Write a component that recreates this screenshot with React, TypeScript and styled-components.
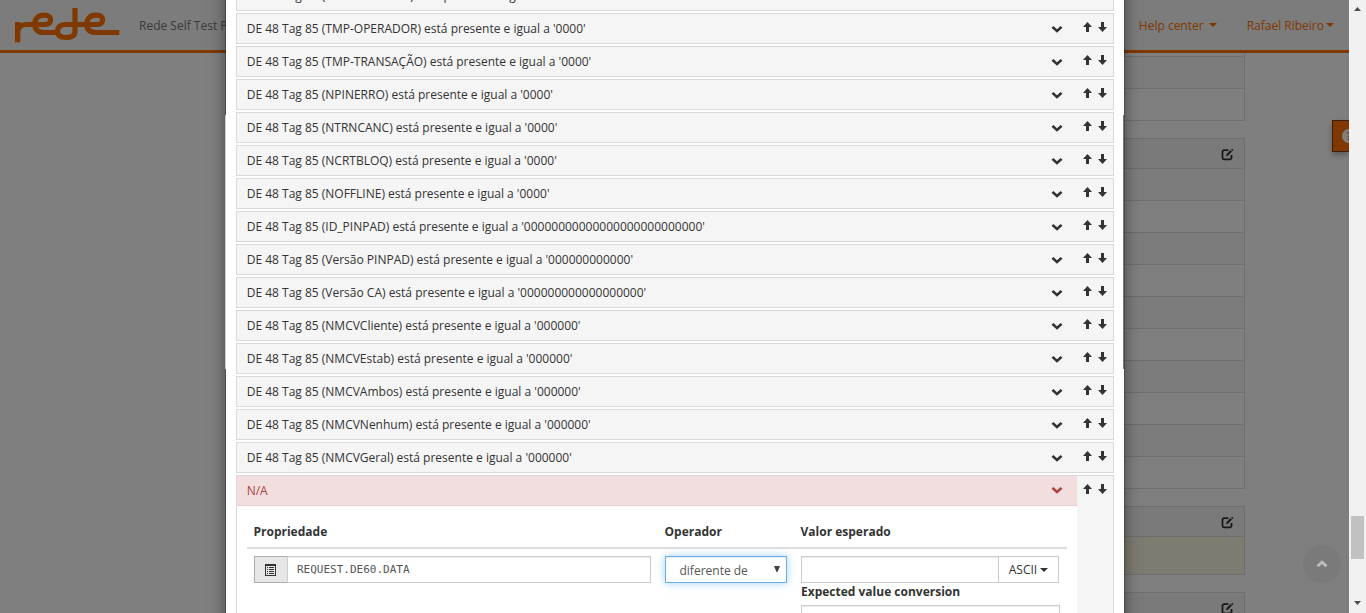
import React from "react";
import styled, { createGlobalStyle, css } from "styled-components";

const GlobalStyle = createGlobalStyle`
  * { box-sizing: border-box; }
  html, body { margin: 0; padding: 0; overflow: hidden; }
  body {
    font-family: "Open Sans", "Liberation Sans", sans-serif;
    font-size: 12px;
    line-height: 17px;
    color: #333;
    background: #fff;
  }
`;

const Screen = styled.div`
  display: grid;
  grid-template-columns: 1349px 17px;
  width: 1366px;
  height: 613px;
  overflow: hidden;
`;

const Viewport = styled.div`
  position: relative;
  height: 613px;
  overflow: hidden;
`;

/* ---------- page behind the dialog ---------- */

const Header = styled.header`
  display: flex;
  align-items: center;
  height: 53px;
  padding-left: 14px;
  background: #f8f8f8;
  border-bottom: 3px solid #ff7300;
`;

const Brand = styled.span`
  margin-left: 18px;
  color: #777;
  flex: 1;
`;

const NavItem = styled.span<{ $gap: number; $end: number }>`
  display: flex;
  align-items: center;
  gap: ${(p) => p.$gap}px;
  margin-right: ${(p) => p.$end}px;
  color: #ff7300;
`;

const Caret = styled.i`
  width: 0;
  height: 0;
  border-top: 4px solid currentColor;
  border-left: 4px solid transparent;
  border-right: 4px solid transparent;
`;

const Content = styled.main`
  display: flex;
  flex-direction: column;
  gap: 17px;
  width: 300px;
  margin-left: 945px;
`;

const Panel = styled.section`
  border: 1px solid #ddd;
  &:first-child { border-top: 0; padding-top: 3px; }
`;

const PanelHead = styled.div`
  display: flex;
  justify-content: flex-end;
  align-items: center;
  height: 29px;
  padding: 1px 10px 0 0;
  background: #f5f5f5;
`;

const PanelRow = styled.div<{ $odd?: boolean }>`
  height: 32px;
  margin-right: 1px;
  border-top: 1px solid #ddd;
  background: ${(p) => (p.$odd ? "#f9f9f9" : "#fff")};
`;

const PanelNote = styled.div`
  height: 38px;
  border-top: 1px solid #ddd;
  background: #fcf8e3;
`;

const HelpTab = styled.div`
  position: absolute;
  top: 120px;
  right: 0;
  display: flex;
  align-items: center;
  width: 17px;
  height: 32px;
  padding-left: 9px;
  overflow: hidden;
  background: #ff7300;
  border: 1px solid #803a00;
  border-right: 0;
  box-shadow: 0 3px 6px rgba(0, 0, 0, 0.3);
`;

const HelpDot = styled.span`
  flex: none;
  width: 14px;
  height: 14px;
  border-radius: 7px;
  background: #fff;
  color: #ff7300;
  font: bold 11px/14px "Open Sans", sans-serif;
  text-align: center;
`;

const Backdrop = styled.div`
  position: absolute;
  inset: 0;
  background: rgba(0, 0, 0, 0.5);
`;

const ToTop = styled.div`
  position: absolute;
  left: 1303px;
  top: 545px;
  display: flex;
  align-items: center;
  justify-content: center;
  width: 38px;
  height: 38px;
  border-radius: 50%;
  background: #7a7a7a;
  color: #bdbdbd;
`;

/* ---------- dialog ---------- */

const Modal = styled.div`
  position: absolute;
  left: 226px;
  top: -20px;
  width: 898px;
  height: 700px;
  padding: 0 10px;
  background: #fff;
  box-shadow: 0 0 0 1px rgba(0, 0, 0, 0.2), 0 5px 15px rgba(0, 0, 0, 0.5);
`;

const ModalEdge = styled.div<{ $left: number; $color: string }>`
  position: absolute;
  left: ${(p) => p.$left}px;
  top: 115px;
  width: 1px;
  height: 254px;
  background: ${(p) => p.$color};
`;

const RuleList = styled.div`
  display: flex;
  flex-direction: column;
  gap: 2px;
`;

const Rule = styled.div<{ $open?: boolean }>`
  display: flex;
  height: ${(p) => (p.$open ? 200 : 31)}px;
  border: 1px solid #d9d9d9;
  background: #f5f5f5;
`;

const RuleMain = styled.div`
  width: 840px;
  background: #fff;
`;

const RuleHead = styled.div<{ $danger?: boolean }>`
  display: flex;
  align-items: center;
  justify-content: space-between;
  height: 29px;
  padding: 0 14.5px 0 9.700px;
  background: #f5f5f5;
  color: #333;
  ${(p) =>
    p.$danger &&
    css`
      height: 30px;
      padding-bottom: 1px;
      background: #f2dede;
      border-bottom: 1px solid #ebccd1;
      color: #a94442;
    `}
`;

const RuleMove = styled.div`
  display: flex;
  gap: 4px;
  padding: 7px 0 0 5px;
`;

const Form = styled.div`
  display: grid;
  grid-template-columns: 411px 136px 273px;
  padding: 10px;
`;

const FormHead = styled.div`
  height: 33px;
  padding: 7px 6.500px 0;
  font-weight: 700;
  border-bottom: 2px solid #ddd;
`;

const FormCell = styled.div`
  padding: 7px 7px 0;
`;

const Group = styled.div<{ $width: number }>`
  display: flex;
  width: ${(p) => p.$width}px;
  height: 27px;
`;

const Addon = styled.span`
  display: flex;
  align-items: center;
  width: 33px;
  padding: 1px 0 0 10px;
  border: 1px solid #adadad;
  border-right: 0;
  background: #e6e6e6;
`;

const Field = styled.div<{ $mono?: boolean }>`
  flex: 1;
  height: 27px;
  padding: 0 9px;
  border: 1px solid #ccc;
  background: #fff;
  box-shadow: inset 0 1px 1px rgba(0, 0, 0, 0.075);
  color: #555;
  line-height: 25px;
  ${(p) => p.$mono && css`font-family: "DejaVu Sans Mono", monospace; font-size: 11px;`}
`;

const Select = styled.div`
  display: flex;
  justify-content: space-between;
  width: 122px;
  height: 27px;
  padding: 0 6px 0 13.500px;
  border: 1px solid #66afe9;
  background: #fff;
  box-shadow: inset 0 1px 1px rgba(0, 0, 0, 0.075), 0 0 8px rgba(102, 175, 233, 0.6);
  color: #555;
  line-height: 28px;
`;

const FormatButton = styled.span`
  display: flex;
  align-items: center;
  justify-content: center;
  gap: 3px;
  width: 61px;
  margin-left: -1px;
  border: 1px solid #ccc;
  background: #fff;
`;

const SubLabel = styled.div`
  height: 22px;
  font-weight: 700;
`;

/* ---------- scrollbar ---------- */

const Scrollbar = styled.div`
  display: flex;
  flex-direction: column;
  align-items: center;
  height: 613px;
  padding: 7px 0;
  background: #f1f1f1;
`;

const Thumb = styled.div`
  width: 13px;
  height: 43px;
  margin: 505px 0 42px;
  background: #c1c1c1;
`;

const ScrollArrow = styled.svg`
  display: block;
  flex: none;
`;

/* ---------- drawings ---------- */

const Logo = () => (
  <svg width="107" height="40" viewBox="14 5 107 40" fill="none" stroke="#ff7300" strokeWidth="5.2">
    <path d="M17.6 42.300V22" />
    <path d="M17.6 38V33Q17.600 24.500 27 24.500H44.500C49 24.500 50.500 22.500 50.500 19.700C50.500 16.500 48.500 15.200 44.500 15.200C37.500 15.200 34.800 19 34.800 24C34.800 30 38 32.500 44 32.500H57" />
    <path d="M75 8V31C75 35.500 72.500 37.500 66 37.500C60 37.500 57.500 35.500 57.500 31.500C57.500 27 60.500 24.500 66 24.500H96.500C101 24.500 102.500 22.500 102.500 19.700C102.500 16.500 100.500 15.200 96.500 15.200C89.500 15.200 86.800 19 86.800 24C86.800 30 90 32.500 96 32.500H119.300" />
  </svg>
);

const Chevron = ({ up }: { up?: boolean }) => (
  <svg width="12" height="8" viewBox="0 0 12 8" fill="currentColor">
    <path d={up ? "M6 .2 11.500 5.200 9.500 7.200 6 4 2.500 7.200.5 5.200Z" : "M2.400.9 6 4.200 9.600.9 11.500 2.800 6 7.700.5 2.800Z"} />
  </svg>
);

const Arrow = ({ down }: { down?: boolean }) => (
  <svg width="11" height="12" viewBox="0 0 11 12" fill="#333">
    <path d={down ? "M4 1H7V6H10L5.500 11 1 6H4Z" : "M5.500 1 10 6H7V11H4V6H1Z"} />
  </svg>
);

const EditIcon = () => (
  <svg width="13" height="13" viewBox="0 0 13 13" fill="none" stroke="#333">
    <path d="M7.500 2.200H3.200Q1.500 2.200 1.500 4V9.500Q1.500 11.300 3.200 11.300H8.800Q10.500 11.300 10.500 9.500V7" strokeWidth="1.800" />
    <path d="M5 8.200 5.600 5.900 9.600 2.100 11 3.500 7.200 7.500Z" fill="#333" stroke="none" />
    <path d="M10.200 1.500 11.200.7 12.400 1.900 11.600 2.900Z" fill="#333" stroke="none" />
  </svg>
);

const ListIcon = () => (
  <svg width="11" height="12" viewBox="0 0 11 12" fill="#333" shapeRendering="crispEdges">
    <path d="M0 0H11V12H0ZM1 2V11H10V2Z" fillRule="evenodd" />
    <path d="M2 3h1v1H2zM4 3h5v1H4zM2 5h1v1H2zM4 5h5v1H4zM2 7h1v1H2zM4 7h5v1H4zM2 9h1v1H2zM4 9h5v1H4z" />
  </svg>
);

const RULES: [string, string][] = [
  ["TMP-CONEXAO", "0000"],
  ["TMP-OPERADOR", "0000"],
  ["TMP-TRANSAÇÃO", "0000"],
  ["NPINERRO", "0000"],
  ["NTRNCANC", "0000"],
  ["NCRTBLOQ", "0000"],
  ["NOFFLINE", "0000"],
  ["ID_PINPAD", "0".repeat(26)],
  ["Versão PINPAD", "0".repeat(12)],
  ["Versão CA", "0".repeat(18)],
  ["NMCVCliente", "000000"],
  ["NMCVEstab", "000000"],
  ["NMCVAmbos", "000000"],
  ["NMCVNenhum", "000000"],
  ["NMCVGeral", "000000"],
];

const MoveButtons = () => (
  <RuleMove>
    <Arrow />
    <Arrow down />
  </RuleMove>
);

export default function App() {
  return (
    <Screen>
      <GlobalStyle />
      <Viewport>
        <Header>
          <Logo />
          <Brand>Rede Self Test P</Brand>
          <NavItem $gap={5} $end={30}>
            Help center <Caret />
          </NavItem>
          <NavItem $gap={2} $end={15}>
            Rafael Ribeiro <Caret />
          </NavItem>
        </Header>
        <Content>
          <Panel>
            <PanelRow $odd />
            <PanelRow />
          </Panel>
          <Panel>
            <PanelHead><EditIcon /></PanelHead>
            {Array.from({ length: 10 }, (_, i) => (
              <PanelRow key={i} $odd={i % 2 === 0} />
            ))}
          </Panel>
          <Panel>
            <PanelHead><EditIcon /></PanelHead>
            <PanelNote />
          </Panel>
          <Panel>
            <PanelHead><EditIcon /></PanelHead>
          </Panel>
        </Content>
        <HelpTab><HelpDot>?</HelpDot></HelpTab>
        <Backdrop />
        <ToTop><Chevron up /></ToTop>
        <Modal>
          <RuleList>
            {RULES.map(([name, value]) => (
              <Rule key={name}>
                <RuleMain>
                  <RuleHead>
                    <span>{`DE 48 Tag 85 (${name}) está presente e igual a '${value}'`}</span>
                    <Chevron />
                  </RuleHead>
                </RuleMain>
                <MoveButtons />
              </Rule>
            ))}
            <Rule $open>
              <RuleMain>
                <RuleHead $danger>
                  <span>N/A</span>
                  <Chevron />
                </RuleHead>
                <Form>
                  <FormHead>Propriedade</FormHead>
                  <FormHead>Operador</FormHead>
                  <FormHead>Valor esperado</FormHead>
                  <FormCell>
                    <Group $width={397}>
                      <Addon><ListIcon /></Addon>
                      <Field $mono>REQUEST.DE60.DATA</Field>
                    </Group>
                  </FormCell>
                  <FormCell>
                    <Select>
                      <span>diferente de</span>
                      <svg width="6" height="25" viewBox="0 0 6 25" fill="#444">
                        <path d="M0 9H6L3.500 15H2.500Z" />
                      </svg>
                    </Select>
                  </FormCell>
                  <FormCell>
                    <Group $width={258}>
                      <Field />
                      <FormatButton>ASCII <Caret /></FormatButton>
                    </Group>
                    <SubLabel>Expected value conversion</SubLabel>
                    <Field />
                  </FormCell>
                </Form>
              </RuleMain>
              <MoveButtons />
            </Rule>
          </RuleList>
        </Modal>
        <ModalEdge $left={225} $color="#ccc" />
        <ModalEdge $left={1123} $color="#777" />
      </Viewport>
      <Scrollbar>
        <ScrollArrow width="7" height="4" viewBox="0 0 7 4"><path d="M3.500 0 7 4H0Z" fill="#505050" /></ScrollArrow>
        <Thumb />
        <ScrollArrow width="7" height="4" viewBox="0 0 7 4"><path d="M0 0H7L3.500 4Z" fill="#505050" /></ScrollArrow>
      </Scrollbar>
    </Screen>
  );
}
